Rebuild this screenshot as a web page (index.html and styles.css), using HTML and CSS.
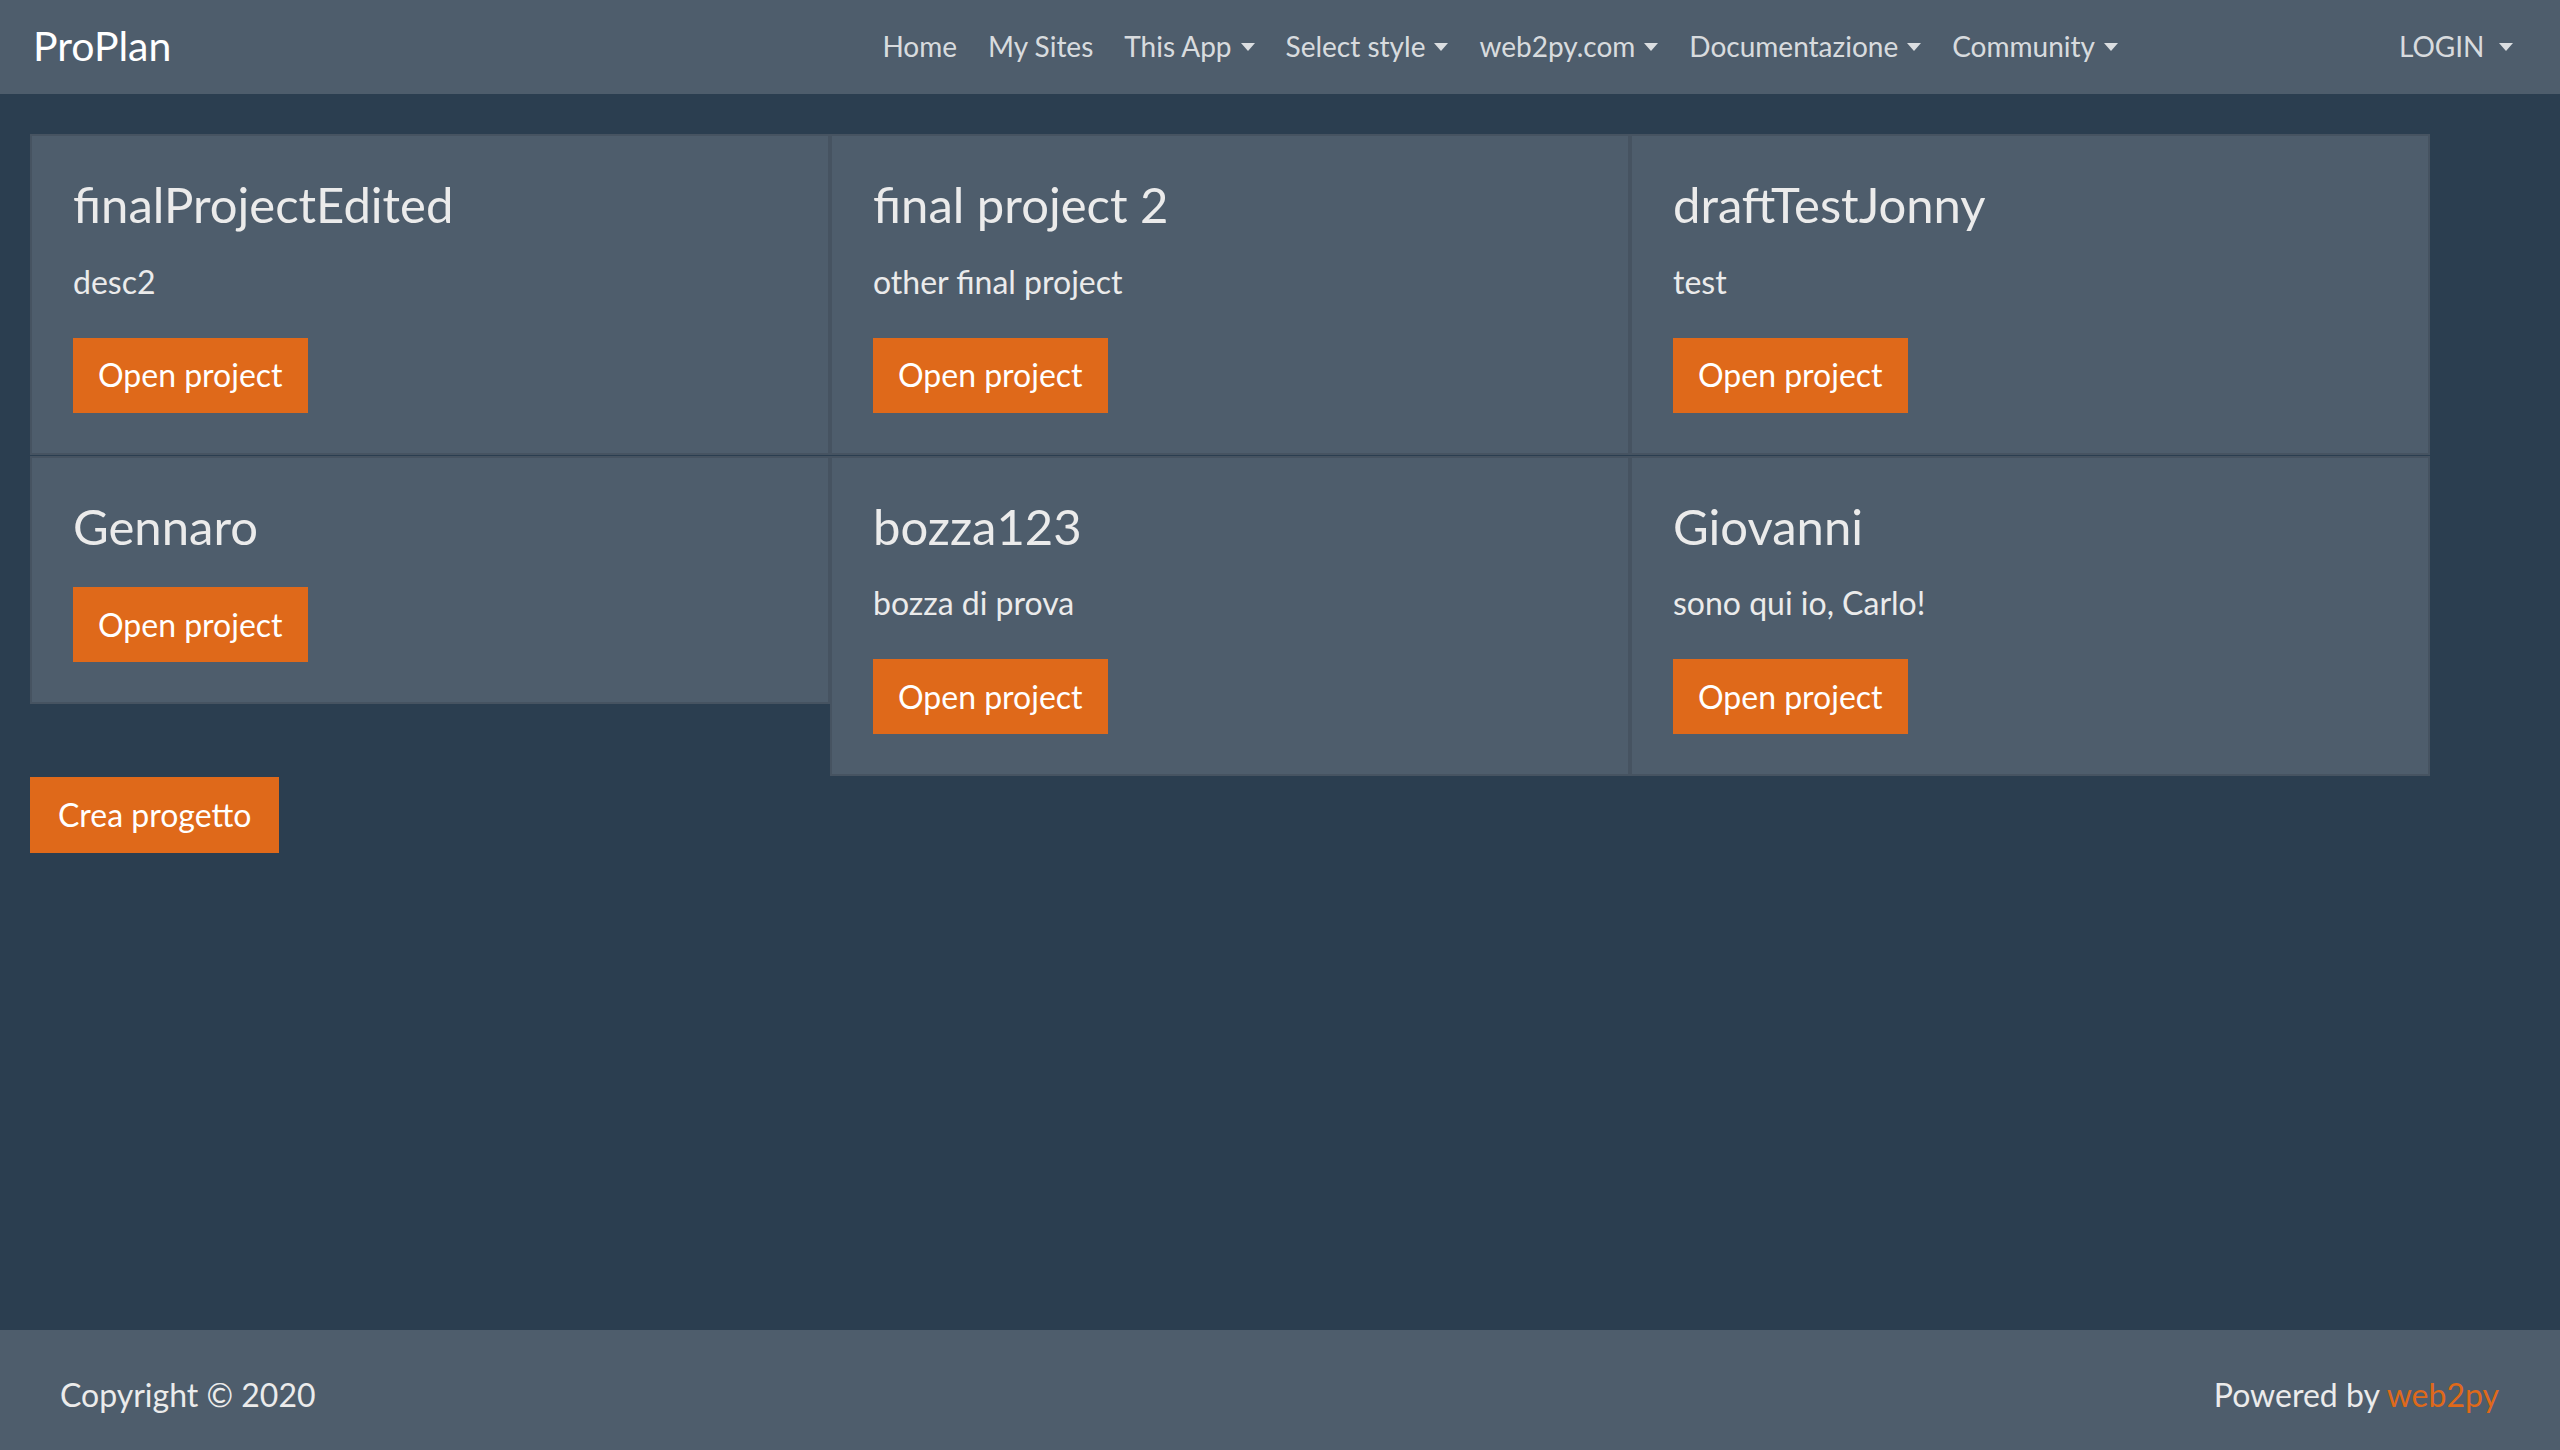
FILE: index.html
```html
<!DOCTYPE html>
<html lang="it">
<head>
<meta charset="utf-8">
<title>ProPlan</title>
<link rel="stylesheet" href="styles.css">
</head>
<body>
<header class="navbar">
  <a class="brand" href="#">ProPlan</a>
  <ul class="nav nav-main">
    <li><a class="nav-link" href="#">Home</a></li>
    <li><a class="nav-link" href="#">My Sites</a></li>
    <li><a class="nav-link dropdown" href="#">This App</a></li>
    <li><a class="nav-link dropdown" href="#">Select style</a></li>
    <li><a class="nav-link dropdown" href="#">web2py.com</a></li>
    <li><a class="nav-link dropdown" href="#">Documentazione</a></li>
    <li><a class="nav-link dropdown" href="#">Community</a></li>
  </ul>
  <ul class="nav nav-right">
    <li><a class="nav-link dropdown login" href="#">LOGIN</a></li>
  </ul>
</header>

<main class="main">
  <div class="cards">
    <div class="card">
      <h4 class="card-title">finalProjectEdited</h4>
      <p class="card-text">desc2</p>
      <a class="btn" href="#">Open project</a>
    </div>
    <div class="card">
      <h4 class="card-title">final project 2</h4>
      <p class="card-text">other final project</p>
      <a class="btn" href="#">Open project</a>
    </div>
    <div class="card">
      <h4 class="card-title">draftTestJonny</h4>
      <p class="card-text">test</p>
      <a class="btn" href="#">Open project</a>
    </div>
    <div class="card">
      <h4 class="card-title title-only">Gennaro</h4>
      <a class="btn" href="#">Open project</a>
    </div>
    <div class="card">
      <h4 class="card-title">bozza123</h4>
      <p class="card-text">bozza di prova</p>
      <a class="btn" href="#">Open project</a>
    </div>
    <div class="card">
      <h4 class="card-title">Giovanni</h4>
      <p class="card-text">sono qui io, Carlo!</p>
      <a class="btn" href="#">Open project</a>
    </div>
  </div>
  <a class="btn btn-create" href="#">Crea progetto</a>
</main>

<footer class="footer">
  <span class="copy">Copyright © 2020</span>
  <span class="powered">Powered by <a href="#" class="w2p">web2py</a></span>
</footer>
</body>
</html>
```

FILE: styles.css
```css
* { box-sizing: border-box; }
html, body { margin: 0; padding: 0; }
body {
  min-height: 1450px;
  display: flex;
  flex-direction: column;
  background: #2b3e50;
  color: #ebebeb;
  font-family: Lato, "Open Sans", "Noto Sans", sans-serif;
  font-size: 32px;
  line-height: 1.5;
}
a { text-decoration: none; }

/* navbar */
.navbar {
  height: 94px;
  flex: none;
  background: #4e5d6c;
  display: flex;
  align-items: flex-start;
  padding: 0 32px 0 33px;
}
.brand {
  margin-top: 21px;
  font-size: 41px;
  line-height: 1.2;
  color: #ffffff;
}
.nav {
  list-style: none;
  margin: 25px 0 0 0;
  padding: 0;
  display: flex;
}
.nav-main { margin-left: auto; }
.nav-right { margin-left: 250px; }
.nav-link {
  display: block;
  padding: 0 15.5px;
  font-size: 28px;
  line-height: 42px;
  color: rgba(255, 255, 255, 0.8);
}
.dropdown::after {
  content: "";
  display: inline-block;
  margin-left: 9px;
  vertical-align: 6px;
  border-top: 8px solid currentColor;
  border-left: 7px solid transparent;
  border-right: 7px solid transparent;
}
.login::after { margin-left: 14px; }

/* main */
.main {
  flex: 1;
  padding: 40px 30px 0 30px;
}
.cards {
  width: 2400px;
  display: flex;
  flex-wrap: wrap;
  align-items: flex-start;
}
.card {
  width: 800px;
  margin-bottom: 1px;
  background: #4e5d6c;
  border: 2px solid rgba(0, 0, 0, 0.1);
  padding: 40px 41px 40px 41px;
}
.card-title {
  margin: 0 0 24px 0;
  font-size: 49px;
  font-weight: 400;
  line-height: 57.6px;
  color: #ebebeb;
}
.card-title.title-only { margin-bottom: 32px; }
.card-text {
  margin: 0 0 32px 0;
  font-size: 32px;
  line-height: 48px;
}
.btn {
  display: inline-block;
  vertical-align: top;
  background: #df691a;
  color: #ffffff;
  font-size: 32px;
  line-height: 48px;
  padding: 13.5px 25px;
}
.btn-create {
  padding: 14px 28px;
}

/* footer */
.footer {
  flex: none;
  height: 120px;
  background: #4e5d6c;
  display: flex;
  justify-content: space-between;
  align-items: flex-start;
  padding: 41px 61px 0 60px;
  font-size: 32px;
  line-height: 48px;
  color: #ebebeb;
}
.w2p { color: #df691a; }
```
